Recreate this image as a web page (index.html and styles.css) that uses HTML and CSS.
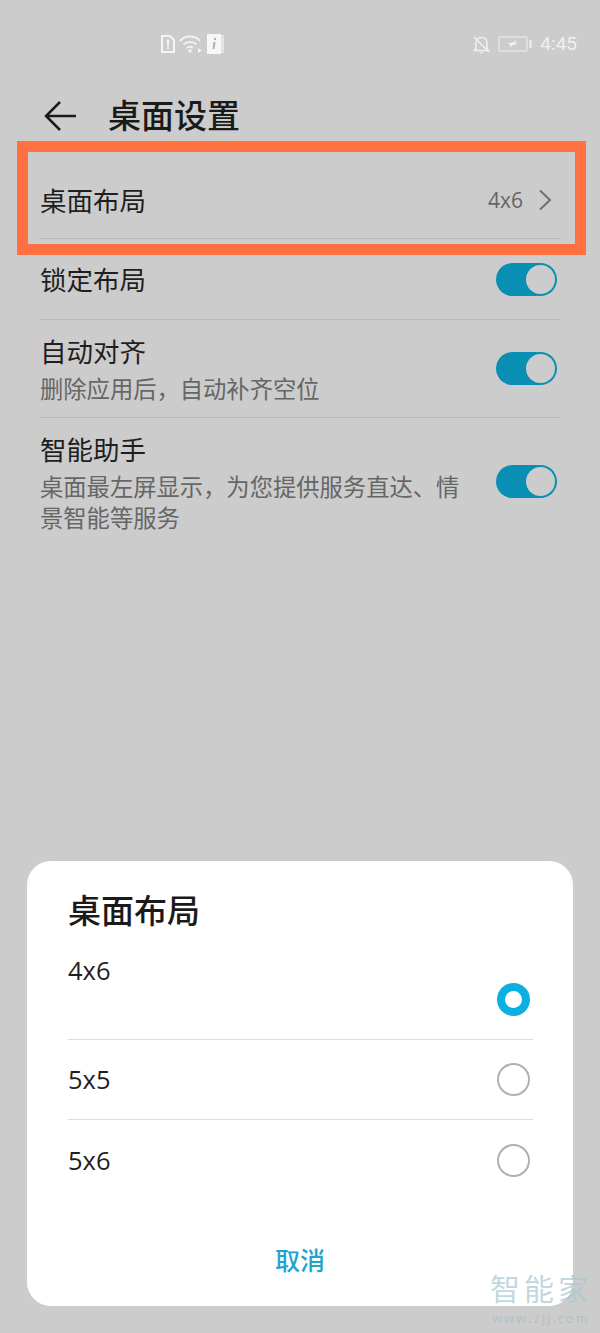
FILE: index.html
```html
<!DOCTYPE html>
<html lang="zh">
<head>
<meta charset="utf-8">
<title>桌面设置</title>
<link rel="stylesheet" href="styles.css">
</head>
<body>
<div class="screen">
  <div class="status">
    <div class="status-left">
      <svg class="ic" width="14" height="18" viewBox="0 0 14 18"><path d="M1 1h8l4 4v12H1z" fill="none" stroke="#f4f4f4" stroke-width="2"/><rect x="6" y="4.500" width="2" height="6.500" fill="#f4f4f4"/><rect x="6" y="12" width="2" height="2" fill="#f4f4f4"/></svg>
      <svg class="ic" width="24" height="18" viewBox="0 0 24 18"><g fill="none" stroke="#f2f2f2" stroke-width="2"><path d="M1 6C6 0 16 0 21 6"/><path d="M4.500 9.500C8 6 14 6 17.500 9.500"/><path d="M8 13c2-1.600 4-1.600 6 0"/></g><circle cx="11" cy="16" r="1.800" fill="#f2f2f2"/><path d="M19 13l4 2.500-4 2.500z" fill="#f2f2f2"/></svg>
      <svg class="ic" width="18" height="20" viewBox="0 0 18 20"><rect x="0" y="0" width="14" height="20" fill="#f7f7f7"/><path d="M14 1h3v18h-3z" fill="#e4e4e4"/><path d="M6.500 8h2l-1 7h-2zM7 4h2v2H7z" fill="#b0b0b0"/></svg>
    </div>
    <div class="status-right">
      <svg class="ic" width="17" height="19" viewBox="0 0 17 19"><g fill="none" stroke="#f0f0f0" stroke-width="1.500"><path d="M3 14V8c0-3 2-5.500 5.500-5.500S14 5 14 8v6l1.500 1.500h-14z"/><path d="M1 2l15 15"/></g><path d="M6.500 17h4l-2 2z" fill="#f0f0f0"/></svg>
      <svg class="ic" width="34" height="16" viewBox="0 0 34 16"><rect x="1" y="1" width="28" height="14" rx="1.500" fill="none" stroke="#e4e4e4" stroke-width="1.500"/><rect x="31.500" y="4" width="2" height="8" fill="#f0f0f0"/><path d="M9 7.500l6-1 3-2.500-1 3.500 3.500.5-6 1-3 2.500 1-3.500z" fill="#f6f6f6"/></svg>
      <span class="time">4:45</span>
    </div>
  </div>

  <header class="appbar">
    <svg class="back" width="32" height="32" viewBox="0 0 32 32"><path d="M16 2L2 16l14 14M2 16h30" fill="none" stroke="#1a1a1a" stroke-width="2.500"/></svg>
    <h1 class="page-title">桌面设置</h1>
  </header>

  <div class="list">
    <div class="row row-layout">
      <span class="label">桌面布局</span>
      <div class="value">
        <span class="value-text">4x6</span>
        <svg width="14" height="22" viewBox="0 0 14 22"><path d="M2 1.500l10 9.500-10 9.500" fill="none" stroke="#6f6f6f" stroke-width="2"/></svg>
      </div>
    </div>
    <div class="row row-lock">
      <span class="label">锁定布局</span>
      <span class="switch"><span class="knob"></span></span>
    </div>
    <div class="row row-align">
      <div class="texts">
        <span class="label">自动对齐</span>
        <span class="sub">删除应用后，自动补齐空位</span>
      </div>
      <span class="switch"><span class="knob"></span></span>
    </div>
    <div class="row row-assist">
      <div class="texts">
        <span class="label">智能助手</span>
        <span class="sub">桌面最左屏显示，为您提供服务直达、情景智能等服务</span>
      </div>
      <span class="switch"><span class="knob"></span></span>
    </div>
  </div>

  <div class="highlight"></div>

  <div class="sheet">
    <h2 class="sheet-title">桌面布局</h2>
    <div class="option option-first"><span class="option-label">4x6</span><span class="radio radio-on"></span></div>
    <div class="option"><span class="option-label">5x5</span><span class="radio"></span></div>
    <div class="option option-last"><span class="option-label">5x6</span><span class="radio"></span></div>
    <div class="cancel">取消</div>
  </div>

  <div class="watermark">
    <span class="wm-cn">智能家</span>
    <span class="wm-en">www.zjj.com</span>
  </div>
</div>
</body>
</html>
```
FILE: styles.css
```css
* { box-sizing: border-box; }
html, body { margin: 0; padding: 0; }
body { font-family: "Noto Sans CJK SC", "Noto Sans", sans-serif; background: #cccccc; }
.screen { position: relative; width: 600px; height: 1333px; background: #cccccc; overflow: hidden; display: flex; flex-direction: column; }

.status { height: 85px; display: flex; justify-content: space-between; align-items: flex-start; padding: 35px 23px 0 161px; }
.status-left, .status-right { display: flex; align-items: center; height: 18px; }
.status-left { gap: 4px; }
.status-right { gap: 8px; }
.ic { display: block; flex: none; }
.time { font-family: "Roboto", sans-serif; font-size: 19px; color: #f0f0f0; line-height: 18px; }

.appbar { height: 58px; display: flex; align-items: center; padding-left: 44px; gap: 32px; margin-bottom: 3px; }
.back { flex: none; margin-top: 4px; }
.page-title { margin: 0; font-size: 33px; font-weight: 500; color: #1a1a1a; line-height: 58px; }

.list { padding: 0 40px; }
.row { display: flex; justify-content: space-between; border-bottom: 1px solid #b9b9b9; }
.row-layout { height: 93px; align-items: center; padding-top: 15px; }
.row-lock { height: 81px; align-items: center; }
.row-align { height: 98px; align-items: center; }
.row-assist { border-bottom: 0; padding-top: 13px; align-items: flex-start; }
.label { font-size: 26.500px; line-height: 36px; color: #1f1f1f; display: block; }
.texts { width: 420px; }
.sub { display: block; font-size: 23.300px; line-height: 31px; color: #666666; margin-top: 4px; }
.value { display: flex; align-items: center; gap: 15px; padding-right: 8px; }
.value-text { font-family: "Open Sans", sans-serif; font-size: 21px; color: #666666; }

.switch { flex: none; width: 61px; height: 33px; border-radius: 17px; background: #0a8fb4; display: flex; align-items: center; justify-content: flex-end; padding-right: 2px; margin-right: 3px; }
.knob { width: 29px; height: 29px; border-radius: 50%; background: #cccccc; }
.row-assist .switch { margin-top: 34px; }

.highlight { position: absolute; left: 17px; top: 141px; width: 569px; height: 114px; border: 11px solid #ff7043; }

.sheet { position: absolute; left: 27px; top: 861px; width: 546px; height: 445px; background: #ffffff; border-radius: 24px; padding: 24px 40px 0 41px; }
.sheet-title { margin: 0 0 27px; font-size: 33px; font-weight: 500; line-height: 48px; color: #1a1a1a; }
.option { height: 80px; display: flex; align-items: center; justify-content: space-between; font-family: "Open Sans", sans-serif; font-size: 25.500px; color: #1f1f1f; border-bottom: 1px solid #dcdcdc; padding-right: 3px; }
.option-label { margin-bottom: 2px; }
.option-first .option-label { margin-bottom: 60px; }
.option-last { height: 81px; border-bottom: 0; }
.radio { width: 33px; height: 33px; border-radius: 50%; border: 2px solid #b0b0b0; background: #fff; }
.radio-on { border: 8px solid #0cb0e0; }
.cancel { margin-top: 40px; text-align: center; font-size: 25px; font-weight: 500; color: #1fa4cf; line-height: 36px; margin-left: -1px; }

.watermark { position: absolute; left: 488px; top: 1272px; width: 106px; display: flex; flex-direction: column; align-items: center; gap: 7px; color: #a8c8d2; opacity: .7; }
.wm-cn { font-size: 30px; line-height: 30px; letter-spacing: 4px; white-space: nowrap; }
.wm-en { font-family: "Open Sans", sans-serif; font-size: 13px; line-height: 18px; letter-spacing: 2px; white-space: nowrap; color: #a9bcc4; }
```
